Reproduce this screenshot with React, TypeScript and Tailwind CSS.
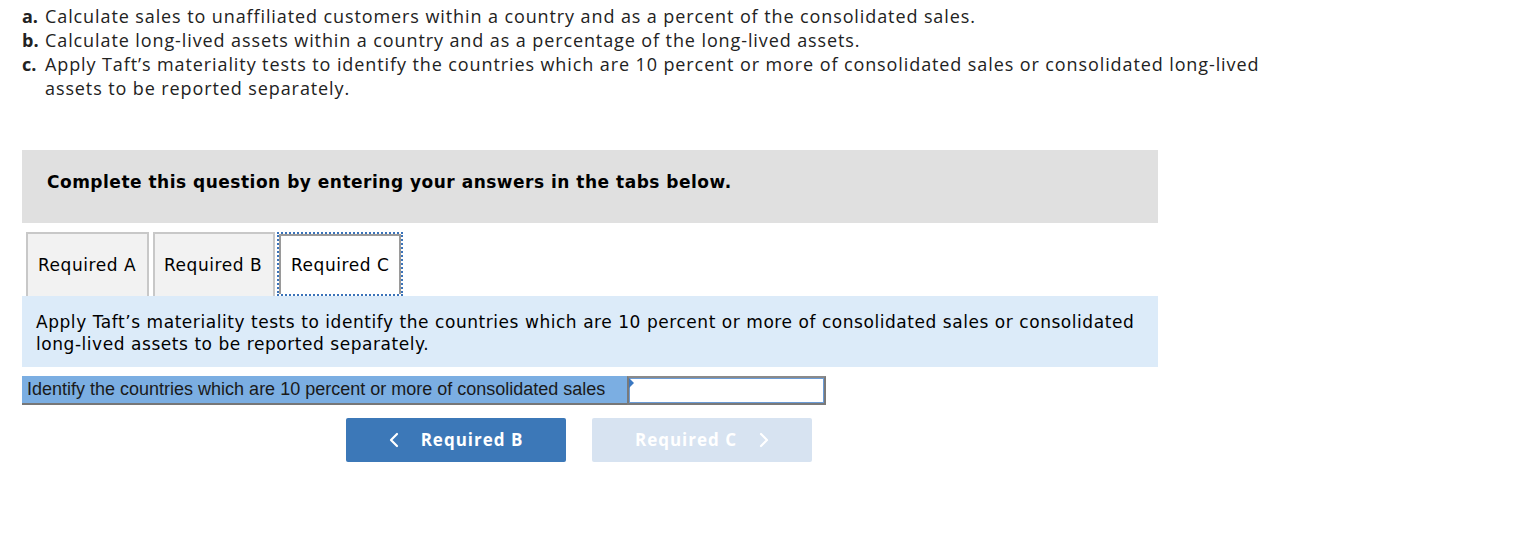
import React from "react";

export default function App() {
  return (
    <div className="w-[1538px] h-[536px] bg-white pl-[22px] pt-[4px] text-[#1a1a1a]">
      <div className="font-['Open_Sans',sans-serif] text-[18px] leading-[24px] tracking-[0.9px] text-[#222]">
        <div className="flex">
          <span className="w-[23px] shrink-0 font-bold tracking-normal">a.</span>
          <span>Calculate sales to unaffiliated customers within a country and as a percent of the consolidated sales.</span>
        </div>
        <div className="flex">
          <span className="w-[23px] shrink-0 font-bold tracking-normal">b.</span>
          <span>Calculate long-lived assets within a country and as a percentage of the long-lived assets.</span>
        </div>
        <div className="flex">
          <span className="w-[23px] shrink-0 font-bold tracking-normal">c.</span>
          <span className="whitespace-nowrap">
            Apply Taft’s materiality tests to identify the countries which are 10 percent or more of consolidated sales or consolidated long-lived
            <br />
            assets to be reported separately.
          </span>
        </div>
      </div>

      <div className="mt-[50px] w-[1136px] h-[73px] bg-[#e0e0e0] pl-[25px] pt-[21px]">
        <div className="font-['DejaVu_Sans',sans-serif] font-bold text-[17px] leading-[22px] tracking-[0.5px] text-black">
          Complete this question by entering your answers in the tabs below.
        </div>
      </div>

      <div className="mt-[9px] flex h-[64px] items-stretch font-['DejaVu_Sans',sans-serif] text-[17px] tracking-[0.55px] text-black">
        <div className="ml-[4px] w-[123px] border-2 border-b-0 border-[#c8c8c8] bg-[#f2f2f2] flex items-center pl-[10px] pt-[2px]">
          Required A
        </div>
        <div className="ml-[4px] w-[122px] border-2 border-b-0 border-[#c8c8c8] bg-[#f2f2f2] flex items-center pl-[9px] pt-[2px]">
          Required B
        </div>
        <div className="ml-[2px] w-[126px] border-2 border-dotted border-[#3b73b9] bg-white">
          <div className="h-full border-2 border-b-0 border-[#9a9a9a] flex items-center pl-[10px] pt-[2px]">
            Required C
          </div>
        </div>
      </div>

      <div className="w-[1136px] bg-[#dcebf9] pl-[14px] pt-[15px] pb-[12px]">
        <div className="font-['DejaVu_Sans',sans-serif] text-[17px] leading-[22px] tracking-[0.55px] text-black whitespace-nowrap">
          Apply Taft’s materiality tests to identify the countries which are 10 percent or more of consolidated sales or consolidated
          <br />
          long-lived assets to be reported separately.
        </div>
      </div>

      <div className="mt-[9px] flex h-[29px]">
        <div className="w-[605px] bg-[#7baee2] border-b-2 border-[#777] pl-[5px] flex items-center font-['Liberation_Sans',Arial,sans-serif] text-[18px] text-[#1a1a1a] whitespace-nowrap">
          Identify the countries which are 10 percent or more of consolidated sales
        </div>
        <div className="relative w-[199px] h-[29px] border-2 border-[#7a7a7a] border-t-[#8a8a8a] bg-white">
          <div className="absolute inset-0 border border-[#6a9bd6]" />
          <div className="absolute left-0 top-0 w-0 h-0 border-t-[5px] border-b-[5px] border-l-[5px] border-t-transparent border-b-transparent border-l-[#3a78c2]" />
        </div>
      </div>

      <div className="mt-[13px] ml-[324px] flex gap-[26px] font-['Open_Sans',sans-serif] font-bold text-[17px] tracking-[1px] text-white">
        <button className="w-[220px] h-[44px] rounded-[2px] bg-[#3c78b8] flex items-center justify-center gap-[22px]">
          <svg width="10" height="16" viewBox="0 0 10 16" fill="none">
            <path d="M8 2 L2 8 L8 14" stroke="white" strokeWidth="2.2" strokeLinecap="round" strokeLinejoin="round" />
          </svg>
          <span>Required B</span>
        </button>
        <button className="w-[220px] h-[44px] rounded-[2px] bg-[#d7e3f1] flex items-center justify-center gap-[22px]">
          <span>Required C</span>
          <svg width="10" height="16" viewBox="0 0 10 16" fill="none">
            <path d="M2 2 L8 8 L2 14" stroke="white" strokeWidth="2.2" strokeLinecap="round" strokeLinejoin="round" />
          </svg>
        </button>
      </div>
    </div>
  );
}
